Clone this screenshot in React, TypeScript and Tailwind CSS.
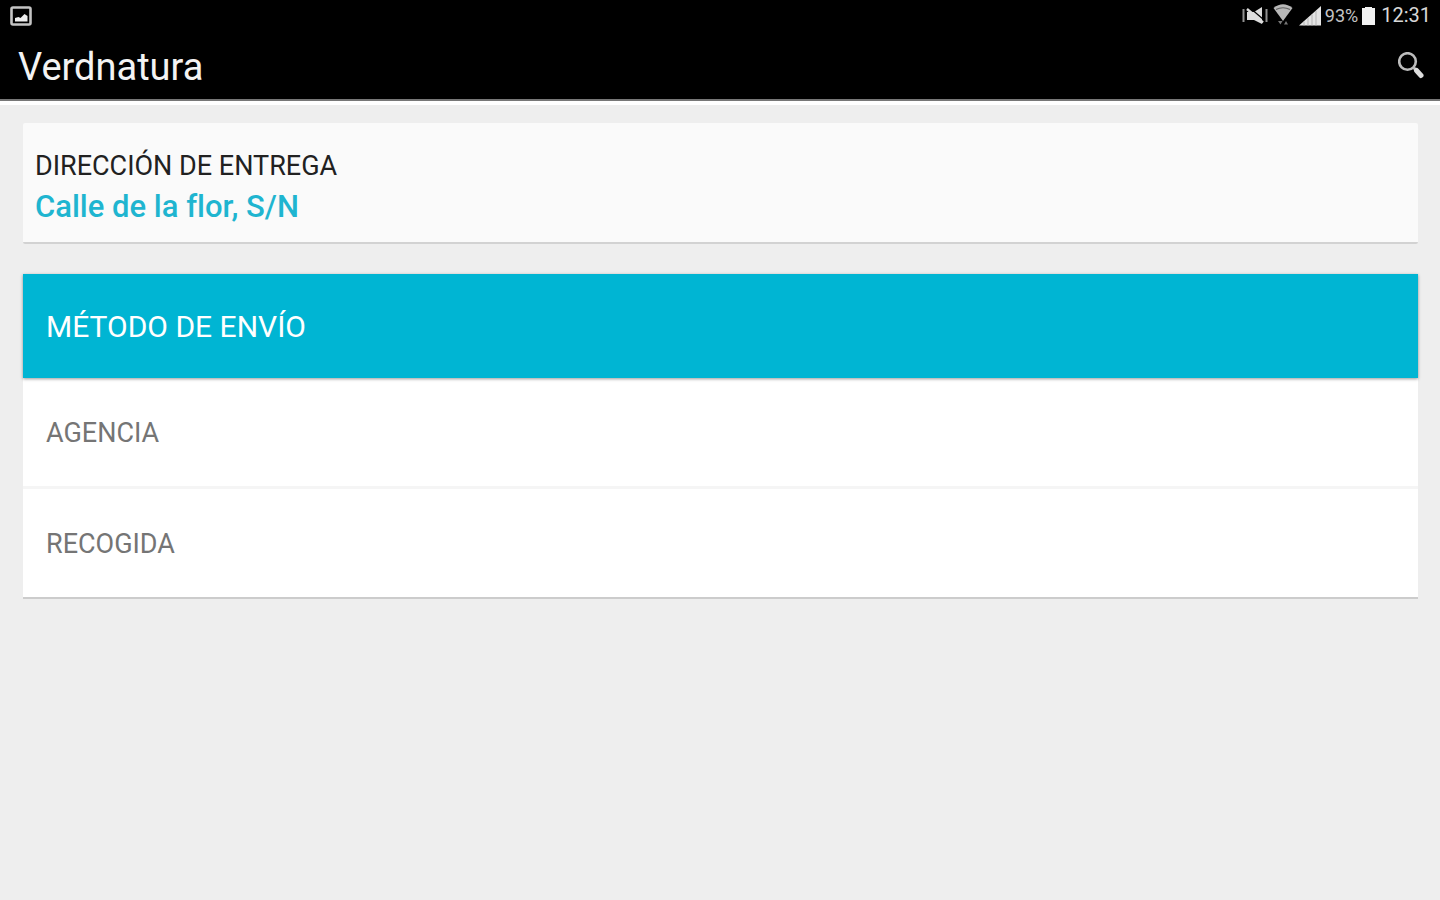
import React, { useState } from 'react';

const shippingMethods = ['AGENCIA', 'RECOGIDA'];

export default function App() {
  const [method, setMethod] = useState<string | null>(null);

  return (
    <div className="min-h-screen bg-[#eeeeee] font-['Roboto','Liberation_Sans',sans-serif]">
      <header className="bg-black text-[#f3f3f3] border-b-2 border-[#777777]">
        <StatusBar />
        <div className="flex items-center justify-between h-[68px] pl-[18px] pr-4">
          <h1 className="text-[38px] leading-[64px] pt-1">Verdnatura</h1>
          <button type="button" aria-label="Buscar" className="cursor-pointer">
            <SearchIcon />
          </button>
        </div>
      </header>
      <div className="h-1 bg-white" />

      <main className="pl-[23px] pr-[22px] pt-[18px] space-y-[30px]">
        <section className="bg-[#fafafa] rounded-xs border-b-2 border-[#d2d2d2] px-3 pt-[25px] pb-3">
          <h2 className="text-[27px] leading-9 text-[#212121]">DIRECCIÓN DE ENTREGA</h2>
          <p className="text-[31px] leading-[46px] font-medium text-[#1fb5d0] [font-variant-ligatures:none]">Calle de la flor, S/N</p>
        </section>

        <section className="bg-white border-b-2 border-[#cccccc]">
          <h2 className="relative bg-[#00b5d3] text-white text-[30px] leading-[102px] pt-0.5 px-[23px] shadow-[0_1px_3px_rgba(0,0,0,0.4)]">
            MÉTODO DE ENVÍO
          </h2>
          <ul className="divide-y-3 divide-[#f5f5f5]">
            {shippingMethods.map((name) => (
              <li key={name}>
                <button
                  type="button"
                  aria-pressed={method === name}
                  onClick={() => setMethod(name)}
                  className="block w-full text-left text-[27px] leading-[106px] pt-0.5 px-[23px] text-[#757575] cursor-pointer"
                >
                  {name}
                </button>
              </li>
            ))}
          </ul>
        </section>
      </main>
    </div>
  );
}

function StatusBar() {
  return (
    <div className="flex items-center justify-between h-[31px] pl-[10px] pr-[9px]">
      <PictureIcon />
      <div className="flex items-center">
        <MuteIcon />
        <WifiIcon />
        <SignalIcon />
        <span className="ml-1 text-[18px] leading-[31px] text-[#c4c4c4]">93%</span>
        <BatteryIcon />
        <span className="ml-[6px] text-[20px] leading-[31px] text-[#d8d8d8]">12:31</span>
      </div>
    </div>
  );
}

function PictureIcon() {
  return (
    <svg width="22" height="20" viewBox="0 0 22 20" aria-hidden="true">
      <rect x="1.5" y="1.5" width="19" height="17" rx="1.5" fill="none" stroke="#c4c4c4" strokeWidth="2.6" />
      <path d="M5 15.500V12l3.500-1 2 1 4-4 3 2v5.500z" fill="#eeeeee" />
    </svg>
  );
}

function MuteIcon() {
  return (
    <svg width="26" height="20" viewBox="0 0 26 20" aria-hidden="true">
      <path d="M1.500 3v13M24.500 3v13" stroke="#909090" strokeWidth="2" />
      <path d="M5 6h7l8-5v17l-8-4H5z" fill="#dddddd" />
      <path d="M7.500 1.500l14 12" stroke="#000000" strokeWidth="1.200" />
      <path d="M5 3l16 13.500" stroke="#dddddd" strokeWidth="2.400" />
    </svg>
  );
}

function WifiIcon() {
  return (
    <svg className="ml-[5px] mr-px" width="20" height="23" viewBox="0 0 20 23" aria-hidden="true">
      <path d="M0.500 4Q10-3.500 19.500 4L10 17z" fill="#b8b8b8" />
      <path d="M3 5.500Q10 2 17 5.500" fill="none" stroke="#606060" strokeWidth="1.200" />
      <path d="M5 17l2.500 3.500L9.500 17zM11 20.500l2-3.500 2 3.500z" fill="#777777" />
    </svg>
  );
}

function SignalIcon() {
  return (
    <svg className="ml-[5px]" width="22" height="20" viewBox="0 0 22 20" aria-hidden="true">
      <path d="M0 19.500L22 0v19.500z" fill="#e4e4e4" />
      <path d="M5 15.500v4M9 12v7.500M13 8.500v11M17 5v14.500" stroke="#b4b4b4" strokeWidth="1" />
    </svg>
  );
}

function BatteryIcon() {
  return (
    <svg className="ml-1" width="13" height="18" viewBox="0 0 13 18" aria-hidden="true">
      <path d="M3 0h7v1h3v17H0V1h3z" fill="#f2f2f2" />
    </svg>
  );
}

function SearchIcon() {
  return (
    <svg width="26" height="27" viewBox="0 0 26 27" aria-hidden="true">
      <circle cx="9.500" cy="9.500" r="8.300" fill="none" stroke="#bcbcbc" strokeWidth="2.600" />
      <path d="M15 15l3 3" stroke="#bcbcbc" strokeWidth="3" />
      <path d="M18.500 18.500l4.500 5" stroke="#dddddd" strokeWidth="5" strokeLinecap="round" />
    </svg>
  );
}
